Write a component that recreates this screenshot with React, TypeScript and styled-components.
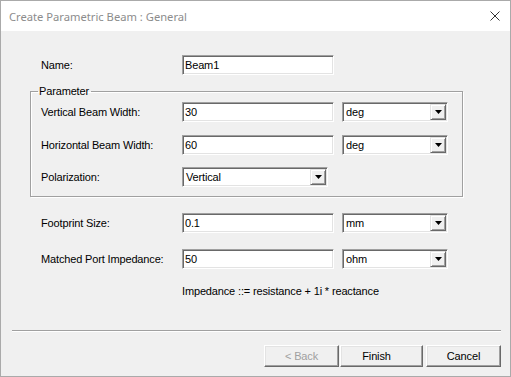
import React from "react";
import styled, { createGlobalStyle } from "styled-components";

const Global = createGlobalStyle`
  html, body { margin: 0; padding: 0; background: #f0f0f0; }
  body { font-family: "Liberation Sans", Arial, sans-serif; font-size: 11px; letter-spacing: -0.15px; color: #000; }
  * { box-sizing: border-box; }
`;

const Window = styled.div`
  width: 511px;
  height: 377px;
  border: 1px solid #aaaaaa;
  background: #f0f0f0;
  display: flex;
  flex-direction: column;
`;

const TitleBar = styled.div`
  height: 30px;
  flex: none;
  background: #ffffff;
  display: flex;
  align-items: center;
  justify-content: space-between;
  padding: 0 10px 0 8px;
`;

const Title = styled.span`
  font-family: "Noto Sans", "Open Sans", sans-serif;
  font-size: 11.2px;
  letter-spacing: 0;
  color: #8c8c8c;
`;

const CloseIcon = styled.svg`
  width: 10px;
  height: 10px;
  display: block;
`;

const Body = styled.div`
  flex: 1;
  display: flex;
  flex-direction: column;
  padding: 24px 9px 0 0;
`;

const Row = styled.div<{ $mt?: number; $inner?: boolean }>`
  display: flex;
  align-items: center;
  height: 20px;
  margin-top: ${(p) => p.$mt ?? 0}px;
  padding-left: ${(p) => (p.$inner ? 0 : 40)}px;
`;

const Label = styled.span`
  width: 141px;
  flex: none;
  white-space: nowrap;
`;

const TextField = styled.input<{ $w?: number }>`
  width: ${(p) => p.$w ?? 152}px;
  height: 20px;
  margin: 0;
  padding: 0 0 0 2px;
  font: inherit;
  letter-spacing: inherit;
  color: #000;
  background: #fff;
  border: 1px solid;
  border-color: #a0a0a0 #ffffff #ffffff #a0a0a0;
  box-shadow: inset 1px 1px 0 #696969, inset -1px -1px 0 #e3e3e3;
  outline: none;
`;

const Combo = styled.div<{ $w: number; $ml?: number }>`
  width: ${(p) => p.$w}px;
  margin-left: ${(p) => p.$ml ?? 0}px;
  height: 20px;
  background: #fff;
  border: 1px solid;
  border-color: #a0a0a0 #ffffff #ffffff #a0a0a0;
  box-shadow: inset 1px 1px 0 #696969, inset -1px -1px 0 #e3e3e3;
  display: flex;
  align-items: center;
  padding: 1px 1px 1px 2px;
`;

const ComboText = styled.span`
  flex: 1;
  padding-left: 1px;
`;

const ComboButton = styled.div`
  width: 16px;
  height: 16px;
  background: #f0f0f0;
  border: 1px solid;
  border-color: #e3e3e3 #696969 #696969 #e3e3e3;
  box-shadow: inset 1px 1px 0 #ffffff, inset -1px -1px 0 #a0a0a0;
  display: flex;
  align-items: center;
  justify-content: center;
`;

const Group = styled.fieldset`
  margin: 10px 0 0 29px;
  width: 433px;
  padding: 0 10px 9px 10px;
  border: 1px solid #a0a0a0;
  box-shadow: 1px 1px 0 #ffffff, inset 1px 1px 0 #ffffff;
  display: flex;
  flex-direction: column;
`;

const Legend = styled.legend`
  margin-left: -3px;
  padding: 0 2px 0 1px;
  line-height: 13px;
`;

const Note = styled.div`
  margin: 16px 0 0 181px;
  line-height: 13px;
`;

const Separator = styled.div`
  margin: 32px 0 0 11px;
  height: 2px;
  border-top: 1px solid #a0a0a0;
  border-bottom: 1px solid #ffffff;
`;

const Buttons = styled.div`
  display: flex;
  justify-content: flex-end;
  margin-top: 13px;
`;

const Button = styled.button<{ $w?: number; $ml?: number; $pr?: number }>`
  width: ${(p) => p.$w ?? 75}px;
  height: 22px;
  margin: 0 0 0 ${(p) => p.$ml ?? 0}px;
  padding: 0 ${(p) => p.$pr ?? 0}px 0 0;
  font: inherit;
  letter-spacing: inherit;
  color: #000;
  background: #f0f0f0;
  border: 1px solid;
  border-color: #ffffff #696969 #696969 #ffffff;
  box-shadow: inset -1px -1px 0 #a0a0a0, inset 1px 1px 0 #e3e3e3;
  &:disabled {
    color: #a0a0a0;
  }
`;

const Arrow = () => (
  <svg width="7" height="4" viewBox="0 0 7 4">
    <path d="M0 0h7L3.5 4z" fill="#000" />
  </svg>
);

const Select = ({ value, w, ml }: { value: string; w: number; ml?: number }) => (
  <Combo $w={w} $ml={ml}>
    <ComboText>{value}</ComboText>
    <ComboButton>
      <Arrow />
    </ComboButton>
  </Combo>
);

export default function App() {
  return (
    <>
      <Global />
      <Window>
        <TitleBar>
          <Title>Create Parametric Beam : General</Title>
          <CloseIcon viewBox="0 0 10 10">
            <path d="M0.5 0.5L9.5 9.5M9.5 0.5L0.5 9.5" stroke="#333" strokeWidth="1" />
          </CloseIcon>
        </TitleBar>
        <Body>
          <Row>
            <Label>Name:</Label>
            <TextField readOnly value="Beam1" />
          </Row>
          <Group>
            <Legend>Parameter</Legend>
            <Row $inner $mt={4}>
              <Label>Vertical Beam Width:</Label>
              <TextField readOnly value="30" />
              <Select value="deg" w={106} ml={8} />
            </Row>
            <Row $inner $mt={13}>
              <Label>Horizontal Beam Width:</Label>
              <TextField readOnly value="60" />
              <Select value="deg" w={106} ml={8} />
            </Row>
            <Row $inner $mt={12}>
              <Label>Polarization:</Label>
              <Select value="Vertical" w={146} />
            </Row>
          </Group>
          <Row $mt={16}>
            <Label>Footprint Size:</Label>
            <TextField readOnly value="0.1" />
            <Select value="mm" w={106} ml={8} />
          </Row>
          <Row $mt={16}>
            <Label>Matched Port Impedance:</Label>
            <TextField readOnly value="50" />
            <Select value="ohm" w={106} ml={8} />
          </Row>
          <Note>Impedance ::= resistance + 1i * reactance</Note>
          <Separator />
          <Buttons>
            <Button disabled>&lt; Back</Button>
            <Button $w={83} $ml={1} $pr={10}>Finish</Button>
            <Button $ml={3}>Cancel</Button>
          </Buttons>
        </Body>
      </Window>
    </>
  );
}
